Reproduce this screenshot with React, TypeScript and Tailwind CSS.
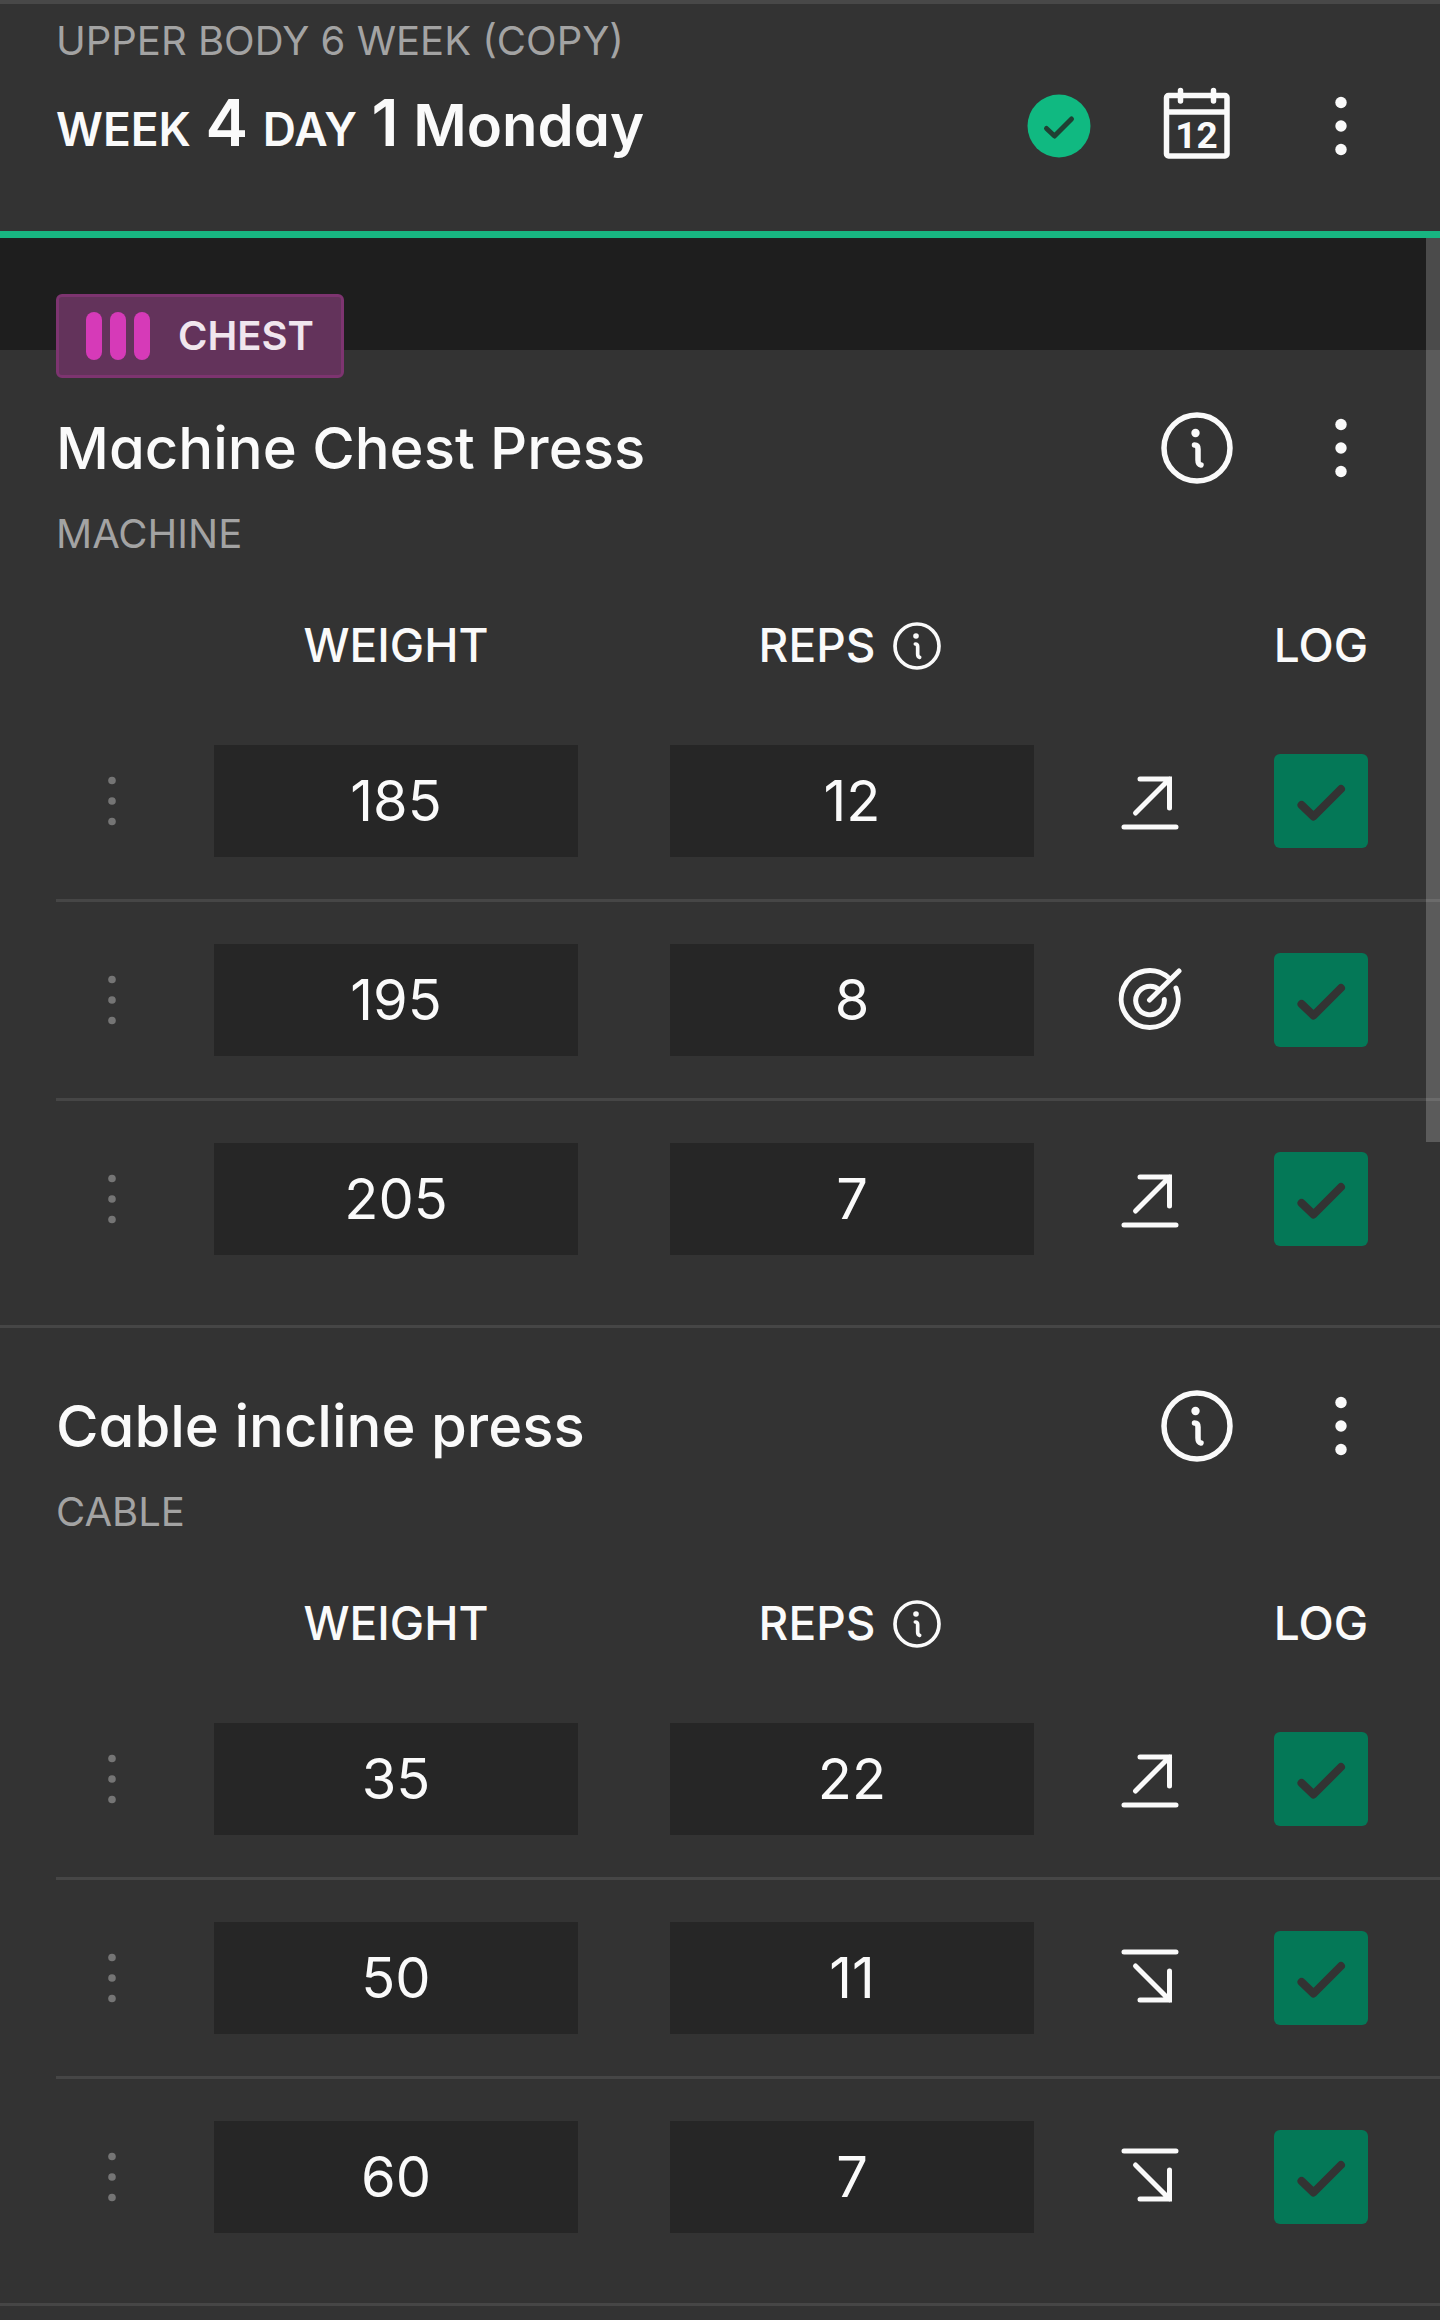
import { ReactNode } from "react";

type Trend = "up" | "target" | "down";

type WorkoutSet = {
  weight: number;
  reps: number;
  trend: Trend;
};

type Exercise = {
  name: string;
  equipment: string;
  sets: WorkoutSet[];
};

const exercises: Exercise[] = [
  {
    name: "Machine Chest Press",
    equipment: "MACHINE",
    sets: [
      { weight: 185, reps: 12, trend: "up" },
      { weight: 195, reps: 8, trend: "target" },
      { weight: 205, reps: 7, trend: "up" },
    ],
  },
  {
    name: "Cable incline press",
    equipment: "CABLE",
    sets: [
      { weight: 35, reps: 22, trend: "up" },
      { weight: 50, reps: 11, trend: "down" },
      { weight: 60, reps: 7, trend: "down" },
    ],
  },
];

const trendLabels = {
  up: "Above target",
  target: "On target",
  down: "Below target",
};

function InfoIcon({ className }: { className: string }) {
  return (
    <svg viewBox="0 0 72 72" fill="none" className={className} aria-hidden="true">
      <circle cx="36" cy="36" r="33" stroke="currentColor" strokeWidth="5.5" />
      <circle cx="34.5" cy="21" r="4.2" fill="currentColor" />
      <path
        d="M33.5 33c2.5 0 3.5 1.5 3.5 4v11c0 3 .5 4.5 3 5"
        stroke="currentColor"
        strokeWidth="5.5"
        strokeLinecap="round"
      />
    </svg>
  );
}

function DotsIcon() {
  return (
    <svg viewBox="0 0 72 72" fill="currentColor" className="size-18" aria-hidden="true">
      <circle cx="36" cy="12.5" r="5.7" />
      <circle cx="36" cy="36" r="5.7" />
      <circle cx="36" cy="59.5" r="5.7" />
    </svg>
  );
}

function GripIcon() {
  return (
    <svg viewBox="0 0 16 56" fill="currentColor" className="h-14 w-4" aria-hidden="true">
      <circle cx="8" cy="7.5" r="3.8" />
      <circle cx="8" cy="28" r="3.8" />
      <circle cx="8" cy="48.5" r="3.8" />
    </svg>
  );
}

function CalendarIcon() {
  return (
    <svg
      viewBox="0 -6 72 84"
      fill="none"
      stroke="currentColor"
      strokeWidth="5.5"
      className="h-21 w-18 shrink-0"
      aria-hidden="true"
    >
      <rect x="5.5" y="5.5" width="60.5" height="60.5" rx="2" />
      <path d="M5.5 22h60.5" />
      <path d="M19.5 .5v10.5M52.5 .5v10.5" strokeLinecap="round" />
      <text
        x="35.5"
        y="57.5"
        textAnchor="middle"
        fontFamily="Roboto, sans-serif"
        fontSize="37"
        fontWeight="700"
        fill="currentColor"
        stroke="none"
      >
        12
      </text>
    </svg>
  );
}

function TrendIcon({ trend }: { trend: Trend }) {
  return (
    <svg
      viewBox="0 0 64 64"
      fill="none"
      stroke="currentColor"
      strokeWidth="5"
      strokeLinecap="round"
      className="mx-auto size-16"
      role="img"
      aria-label={trendLabels[trend]}
    >
      {trend === "up" && <path d="M6 58h52M17.5 44 51.5 10M22 10h29.5v29" />}
      {trend === "down" && <path d="M6 6h52M17.5 20l34 34M22 54h29.5V25" />}
      {trend === "target" && (
        <path d="M31.5 32 61 3M52.2 11.2A28.5 28.5 0 1 0 58 20M41.5 21.8A14.3 14.3 0 1 0 46.3 31.5" />
      )}
    </svg>
  );
}

function IconButton({ label, wide, children }: { label: string; wide?: boolean; children: ReactNode }) {
  return (
    <button
      type="button"
      aria-label={label}
      className={`flex h-18 shrink-0 items-center justify-center ${wide ? "w-[86px]" : "w-[74px]"}`}
    >
      {children}
    </button>
  );
}

function SetRow({ set, index, exercise }: { set: WorkoutSet; index: number; exercise: string }) {
  const label = `${exercise} set ${index + 1}`;
  const inputStyle = "block h-28 w-full bg-[#262626] text-center text-[56px] outline-none";

  return (
    <tr className="border-b-[3px] border-[#464646] last:border-b-0">
      <td className="text-[#757575]">
        <button type="button" aria-label={`Move ${label}`} className="mx-auto block">
          <GripIcon />
        </button>
      </td>
      <td className="px-[46px] py-[42px]">
        <input type="text" inputMode="numeric" defaultValue={set.weight} aria-label={`${label} weight`} className={inputStyle} />
      </td>
      <td className="px-[46px] py-[42px]">
        <input type="text" inputMode="numeric" defaultValue={set.reps} aria-label={`${label} reps`} className={inputStyle} />
      </td>
      <td>
        <TrendIcon trend={set.trend} />
      </td>
      <td className="pr-[18px]">
        <label className="mx-auto grid size-[94px]">
          <input
            type="checkbox"
            defaultChecked
            aria-label={`Log ${label}`}
            className="peer col-start-1 row-start-1 size-full appearance-none rounded-md bg-[#262626] checked:bg-[#047857]"
          />
          <svg
            viewBox="0 0 94 94"
            fill="none"
            stroke="#333333"
            strokeWidth="8"
            strokeLinecap="round"
            strokeLinejoin="round"
            className="pointer-events-none invisible col-start-1 row-start-1 peer-checked:visible"
            aria-hidden="true"
          >
            <path d="M27.5 51 39.5 62.5 67 35" />
          </svg>
        </label>
      </td>
    </tr>
  );
}

function ExerciseSection({ exercise }: { exercise: Exercise }) {
  return (
    <section className="border-b-[3px] border-[#464646] pt-[62px] pb-7 pl-14">
      <div className="flex h-18 items-center gap-16 pr-14">
        <h2 className="flex-1 text-[58px] leading-[64px] font-medium">{exercise.name}</h2>
        <IconButton label={`About ${exercise.name}`}>
          <InfoIcon className="size-18" />
        </IconButton>
        <IconButton label={`${exercise.name} options`} wide>
          <DotsIcon />
        </IconButton>
      </div>
      <p className="mt-[26px] text-[40px] leading-[48px] text-[#a3a3a3]">{exercise.equipment}</p>
      <table className="mt-[30px] w-full table-fixed border-collapse">
        <thead>
          <tr className="h-[115px] text-[46px]">
            <td className="w-28" />
            <th scope="col" className="font-medium">
              WEIGHT
            </th>
            <th scope="col" className="pr-1 font-medium">
              <span className="flex items-center justify-center gap-[18px]">
                REPS
                <button type="button" aria-label="About reps">
                  <InfoIcon className="size-12" />
                </button>
              </span>
            </th>
            <td className="w-35" />
            <th scope="col" className="w-55 pr-[18px] font-medium">
              LOG
            </th>
          </tr>
        </thead>
        <tbody>
          {exercise.sets.map((set, index) => (
            <SetRow key={index} set={set} index={index} exercise={exercise.name} />
          ))}
        </tbody>
      </table>
    </section>
  );
}

function App() {
  return (
    <div className="min-h-screen bg-[#333333] font-['Inter','Liberation_Sans',sans-serif] text-[#fafafa] [font-feature-settings:'cv11']">
      <header className="border-t-4 border-b-[7px] border-t-[#484848] border-b-[#18b681] pt-[13px] pr-14 pb-[69px] pl-14">
        <p className="text-[40px] leading-[48px] text-[#a3a3a3]">UPPER BODY 6 WEEK (COPY)</p>
        <div className="mt-[25px] flex h-18 items-center gap-16">
          <h1 className="flex-1 text-[58px] leading-[72px] font-semibold">
            <span className="text-[46px]">WEEK</span> <span className="text-[64px]">4</span>{" "}
            <span className="text-[46px]">DAY</span> <span className="text-[64px]">1</span> Monday
          </h1>
          <IconButton label="Workout complete">
            <svg viewBox="0 0 64 64" fill="none" className="size-16" aria-hidden="true">
              <circle cx="32" cy="32" r="31.5" fill="#10b981" />
              <path
                d="M19.5 34.5 27.5 42 44.5 25"
                stroke="#1f4033"
                strokeWidth="5"
                strokeLinecap="round"
                strokeLinejoin="round"
              />
            </svg>
          </IconButton>
          <IconButton label="Calendar">
            <CalendarIcon />
          </IconButton>
          <IconButton label="Workout options" wide>
            <DotsIcon />
          </IconButton>
        </div>
      </header>
      <main className="relative">
        <div className="flex h-28 items-end bg-[#1e1e1e] pl-14">
          <div className="-mb-7 flex h-21 items-center gap-7 rounded-md border-3 border-[#7d3470] bg-[#63335b] px-[27px]">
            <span className="flex gap-2" aria-hidden="true">
              <span className="h-12 w-4 rounded-full bg-[#d63ab8]" />
              <span className="h-12 w-4 rounded-full bg-[#d63ab8]" />
              <span className="h-12 w-4 rounded-full bg-[#d63ab8]" />
            </span>
            <span className="text-[40px] font-semibold text-[#f0e6ee]">CHEST</span>
          </div>
        </div>
        {exercises.map((exercise) => (
          <ExerciseSection key={exercise.name} exercise={exercise} />
        ))}
        {/* scroll thumb */}
        <div className="absolute top-0 right-0 h-[904px] w-3.5 bg-white/20" />
      </main>
    </div>
  );
}

export default App;
